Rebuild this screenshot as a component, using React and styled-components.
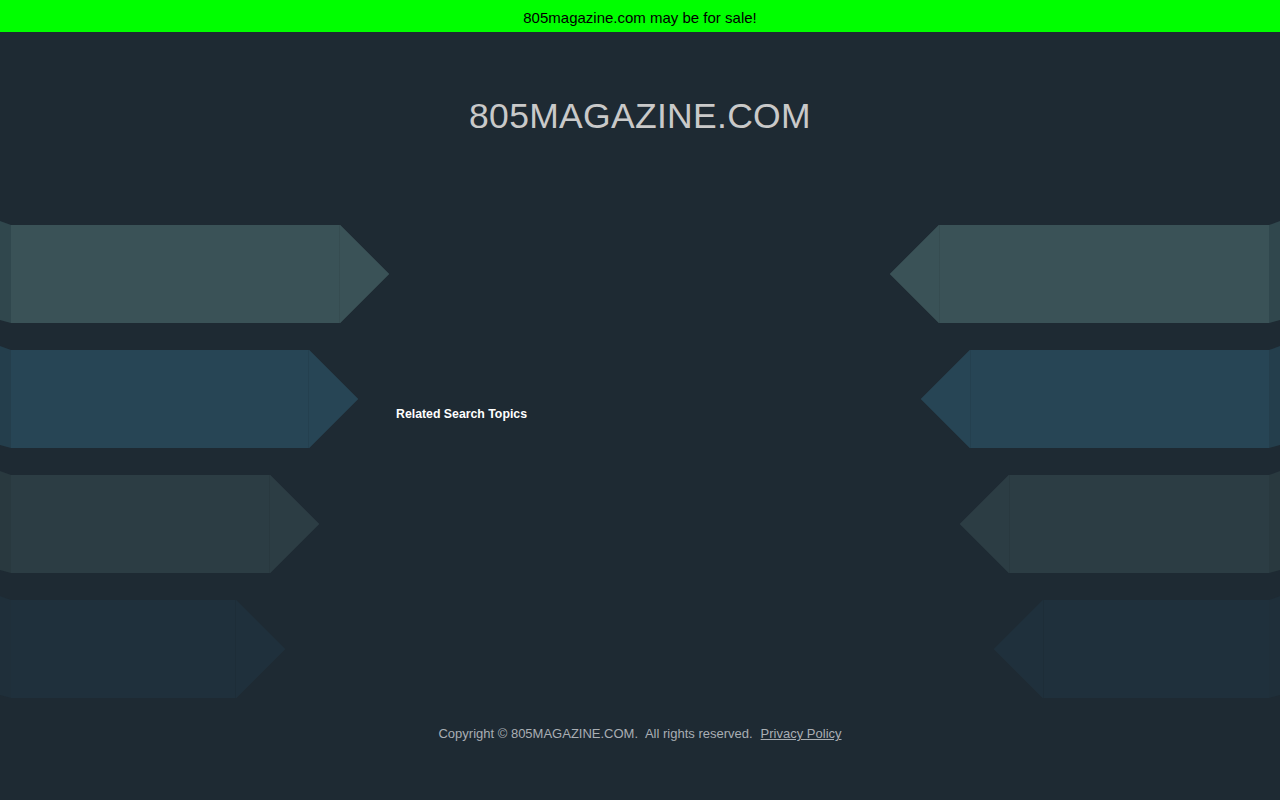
import styled, { createGlobalStyle } from "styled-components";

const GlobalStyle = createGlobalStyle`
  html, body {
    margin: 0;
    padding: 0;
    background-color: #1e2a33;
    font-family: Arial, "Liberation Sans", sans-serif;
  }
`;

const Page = styled.div`
  min-height: 800px;
  display: flex;
  flex-direction: column;
  background-color: #1e2a33;
`;

const SaleBar = styled.div`
  height: 32px;
  display: flex;
  align-items: center;
  justify-content: center;
  background-color: #00ff00;
  color: #000;
  font-size: 15px;
  padding-top: 3px;
  box-sizing: border-box;
`;

const Header = styled.header`
  height: 189px;
  text-align: center;

  h1 {
    margin: 0;
    padding-top: 64px;
    font-size: 35.5px;
    font-weight: normal;
    line-height: normal;
    color: #c9c9c9;
    letter-spacing: 0.3px;
  }
`;

const Main = styled.main`
  display: grid;
  grid-template-columns: 390px 1fr 390px;
  height: 480px;
`;

const ArrowColumn = styled.div`
  display: flex;
  flex-direction: column;
  align-items: ${(p) => (p.$right ? "flex-end" : "flex-start")};
  gap: 23px;
`;

const Row = styled.div`
  display: flex;
  flex-direction: ${(p) => (p.$right ? "row-reverse" : "row")};
  align-items: flex-start;
  height: 102px;
`;

const Fold = styled.div`
  width: 11px;
  height: 102px;
  background-color: ${(p) => p.$color};
  clip-path: ${(p) =>
    p.$right
      ? "polygon(0 4px, 100% 0, 100% 99px, 0 102px)"
      : "polygon(0 0, 100% 4px, 100% 102px, 0 99px)"};
`;

const Body = styled.div`
  margin-top: 4px;
  height: 98px;
  width: ${(p) => p.$width + 49}px;
  background: ${(p) =>
    p.$right
      ? `linear-gradient(to right, ${p.$color} 49px, rgba(0,0,0,0.07) 49px, rgba(0,0,0,0.07) 50px, ${p.$color} 50px)`
      : `linear-gradient(to left, ${p.$color} 49px, rgba(0,0,0,0.07) 49px, rgba(0,0,0,0.07) 50px, ${p.$color} 50px)`};
  background-color: ${(p) => p.$color};
  clip-path: ${(p) =>
    p.$right
      ? "polygon(49px 0, 100% 0, 100% 100%, 49px 100%, 0 50%)"
      : "polygon(0 0, calc(100% - 49px) 0, 100% 50%, calc(100% - 49px) 100%, 0 100%)"};
`;

const Center = styled.div`
  padding: 186px 0 0 6px;

  h2 {
    margin: 0;
    font-size: 12.3px;
    font-weight: bold;
    color: #ffffff;
    line-height: 15px;
  }
`;

const Footer = styled.footer`
  padding-top: 25px;
  text-align: center;
  font-size: 13px;
  color: #a9aeb3;

  span {
    margin-right: 4px;
  }

  a {
    margin-left: 4px;
    color: #a9aeb3;
    text-decoration: underline;
  }
`;

const arrows = [
  { width: 329, color: "#3a5257", fold: "#30474d" },
  { width: 298, color: "#274555", fold: "#243e4c" },
  { width: 259, color: "#2c3d44", fold: "#29393f" },
  { width: 225, color: "#1f303c", fold: "#1f2f3a" },
];

function ArrowRow({ width, color, fold, right }) {
  return (
    <Row $right={right}>
      <Fold $color={fold} $right={right} />
      <Body $width={right ? width + 1 : width} $color={color} $right={right} />
    </Row>
  );
}

export default function App() {
  return (
    <>
      <GlobalStyle />
      <Page>
        <SaleBar>805magazine.com may be for sale!</SaleBar>
        <Header>
          <h1>805MAGAZINE.COM</h1>
        </Header>
        <Main>
          <ArrowColumn>
            {arrows.map((a, i) => (
              <ArrowRow key={i} {...a} />
            ))}
          </ArrowColumn>
          <Center>
            <h2>Related Search Topics</h2>
          </Center>
          <ArrowColumn $right>
            {arrows.map((a, i) => (
              <ArrowRow key={i} {...a} right />
            ))}
          </ArrowColumn>
        </Main>
        <Footer>
          <span>Copyright © 805MAGAZINE.COM.</span> <span>All rights reserved.</span>
          <a href="#">Privacy Policy</a>
        </Footer>
      </Page>
    </>
  );
}
